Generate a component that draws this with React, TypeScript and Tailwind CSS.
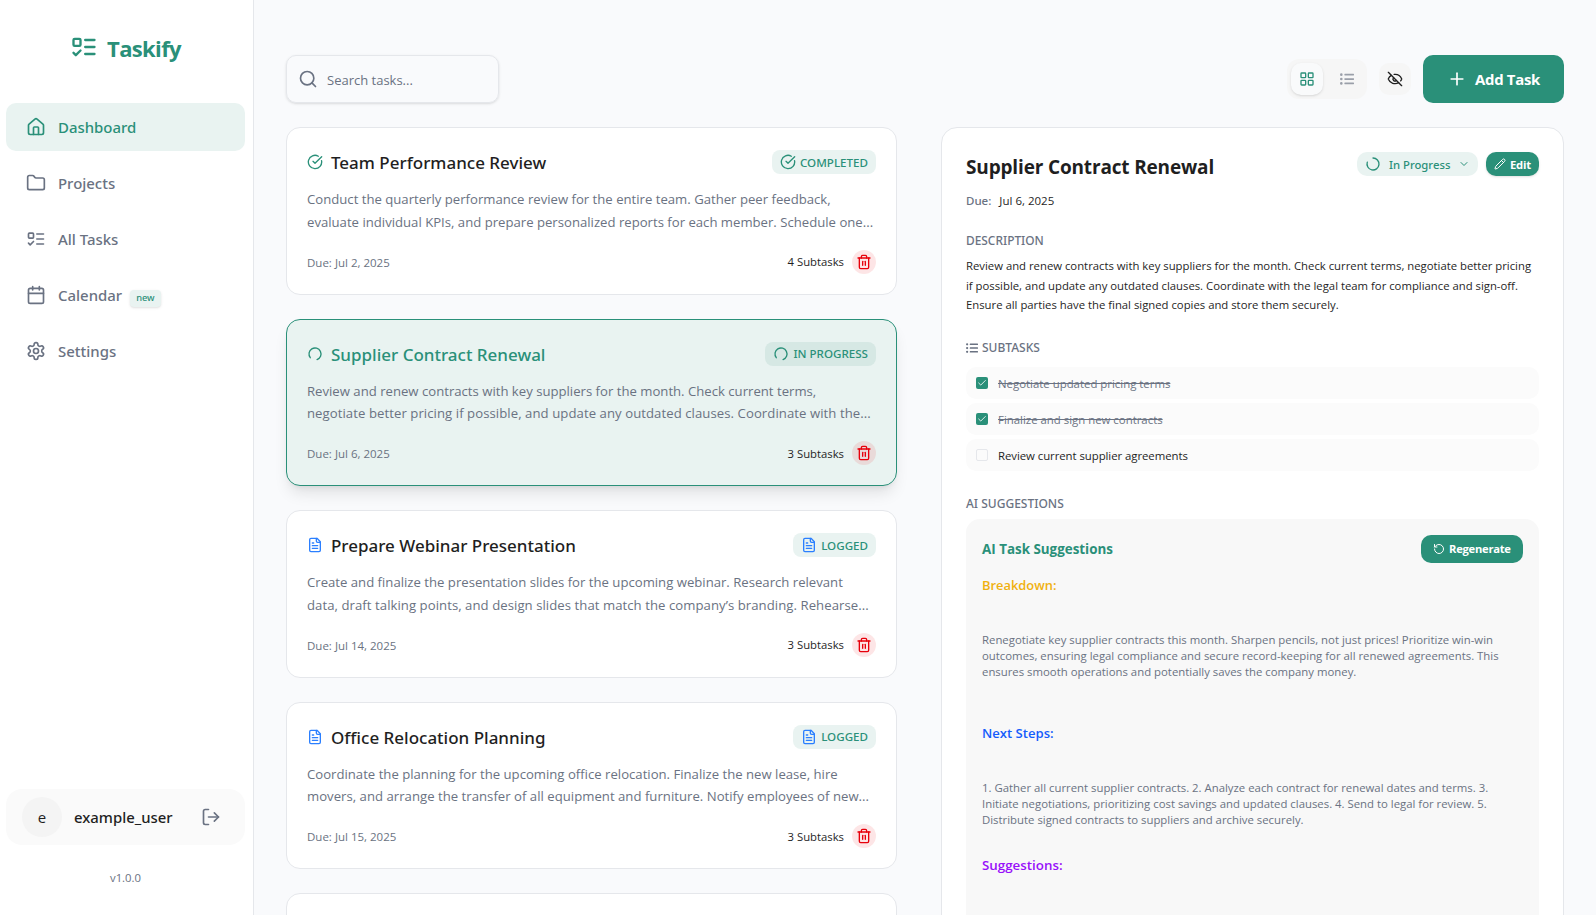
import React from "react";
import {
  LuCalendar,
  LuCheck,
  LuChevronDown,
  LuCircleCheckBig,
  LuEyeOff,
  LuFileText,
  LuFolder,
  LuHouse,
  LuLayoutGrid,
  LuListTodo,
  LuLoaderCircle,
  LuLogOut,
  LuPencil,
  LuPlus,
  LuRotateCcw,
  LuSearch,
  LuSettings,
  LuTrash2,
} from "react-icons/lu";
import { FaListUl } from "react-icons/fa";

type Status = "completed" | "progress" | "logged";

interface Task {
  title: string;
  status: Status;
  lines: string[];
  due: string;
  subtasks: number;
  selected?: boolean;
  lastLine?: string;
}

const tasks: Task[] = [
  {
    title: "Team Performance Review",
    status: "completed",
    lines: [
      "Conduct the quarterly performance review for the entire team. Gather peer feedback,",
      "evaluate individual KPIs, and prepare personalized reports for each member. Schedule one...",
    ],
    due: "Jul 2, 2025",
    subtasks: 4,
  },
  {
    title: "Supplier Contract Renewal",
    status: "progress",
    lines: [
      "Review and renew contracts with key suppliers for the month. Check current terms,",
      "negotiate better pricing if possible, and update any outdated clauses. Coordinate with the...",
    ],
    due: "Jul 6, 2025",
    subtasks: 3,
    selected: true,
    lastLine: "tracking-[0.065px]",
  },
  {
    title: "Prepare Webinar Presentation",
    status: "logged",
    lines: [
      "Create and finalize the presentation slides for the upcoming webinar. Research relevant",
      "data, draft talking points, and design slides that match the company’s branding. Rehearse...",
    ],
    due: "Jul 14, 2025",
    subtasks: 3,
    lastLine: "tracking-[0.055px]",
  },
  {
    title: "Office Relocation Planning",
    status: "logged",
    lines: [
      "Coordinate the planning for the upcoming office relocation. Finalize the new lease, hire",
      "movers, and arrange the transfer of all equipment and furniture. Notify employees of new...",
    ],
    due: "Jul 15, 2025",
    subtasks: 3,
    lastLine: "tracking-[0.02px]",
  },
];

const statusLabel: Record<Status, string> = {
  completed: "COMPLETED",
  progress: "IN PROGRESS",
  logged: "LOGGED",
};

function StatusIcon({ status }: { status: Status }) {
  if (status === "completed") return <LuCircleCheckBig className="size-4 shrink-0 text-[#2a9079]" />;
  if (status === "progress") return <LuLoaderCircle className="size-4 shrink-0 rotate-[142deg] text-[#2a9079]" />;
  return <LuFileText className="size-4 shrink-0 text-[#2b7fff]" />;
}

function Lines({ lines, lastLine = "" }: { lines: string[]; lastLine?: string }) {
  return (
    <>
      {lines.map((line, i) => (
        <span key={line} className={`block whitespace-nowrap ${i === lines.length - 1 ? lastLine : ""}`}>
          {line}
        </span>
      ))}
    </>
  );
}

function TaskCard({ task }: { task: Task }) {
  const selected = task.selected;
  return (
    <article
      className={`h-[167.5px] shrink-0 rounded-[14px] border px-5 py-5 ${
        selected
          ? "border-[#2a9079] bg-[#e9f3f1] shadow-[0_10px_15px_-3px_rgba(0,0,0,0.1),0_4px_6px_-4px_rgba(0,0,0,0.1)]"
          : "border-gray-200 bg-white"
      }`}
    >
      <div className="flex h-7 items-center justify-between">
        <div className="flex items-center gap-2">
          <StatusIcon status={task.status} />
          <h3
            className={`pt-px font-['Noto_Sans'] text-[17px] leading-[27px] font-medium whitespace-nowrap ${
              selected ? "text-[#2a9079]" : "text-[#1f1f1f]"
            }`}
          >
            {task.title}
          </h3>
        </div>
        <span
          className={`flex h-6 items-center gap-1 rounded-lg px-2 font-['Noto_Sans'] text-[11.6px] font-medium whitespace-nowrap text-[#2a9079] ${
            selected ? "bg-[#d6e8e4]" : "bg-[#e9f3f1]"
          }`}
        >
          <StatusIcon status={task.status} />
          <span className="pt-px">{statusLabel[task.status]}</span>
        </span>
      </div>
      <p className="mt-3 text-[13.15px] leading-[22.75px] text-gray-500">
        <Lines lines={task.lines} lastLine={task.lastLine} />
      </p>
      <div className="mt-4 flex h-6 items-center justify-between">
        <span className="pt-0.5 text-[11.5px] text-gray-500">Due: {task.due}</span>
        <div className="flex items-center gap-2">
          <span className="pt-0.5 text-[11.3px] text-[#1f1f1f]">{task.subtasks} Subtasks</span>
          <button className="flex size-6 items-center justify-center rounded-full bg-[#e7000b]/10 text-[#e7000b]">
            <LuTrash2 className="size-4" />
          </button>
        </div>
      </div>
    </article>
  );
}

const navItems = [
  { label: "Dashboard", icon: LuHouse, active: true },
  { label: "Projects", icon: LuFolder },
  { label: "All Tasks", icon: LuListTodo },
  { label: "Calendar", icon: LuCalendar, badge: "new" },
  { label: "Settings", icon: LuSettings },
];

function Sidebar() {
  return (
    <aside className="flex w-[254px] shrink-0 flex-col border-r border-gray-200 bg-white pr-2 pl-1.5">
      <div className="flex h-[103px] items-start justify-center gap-[9px] pt-8 text-[#2a9079]">
        <LuListTodo className="mt-px size-7" />
        <span className="text-[22px] leading-[32px] font-bold tracking-[-0.65px]">Taskify</span>
      </div>
      <nav className="flex flex-col gap-2">
        {navItems.map(({ label, icon: Icon, active, badge }) => (
          <a
            key={label}
            className={`flex h-12 items-center gap-3 rounded-[10px] px-5 font-['Noto_Sans'] text-[14.95px] font-medium ${
              active ? "bg-[#e9f3f1] text-[#2a9079]" : "text-gray-500"
            }`}
          >
            <Icon className="size-5" />
            <span className="flex items-center gap-2">
              {label}
              {badge && (
                <span className="mt-1.5 flex h-[17px] items-center rounded bg-[#e9f3f1] px-1.5 text-[9.3px] text-[#2a9079] shadow-sm">
                  {badge}
                </span>
              )}
            </span>
          </a>
        ))}
      </nav>
      <div className="mt-auto flex h-14 items-center rounded-2xl bg-[#fafafa] pr-6 pl-4">
        <div className="flex size-10 items-center justify-center rounded-full bg-[#f4f4f4] text-[15px] text-[#1f1f1f]">e</div>
        <span className="ml-3 font-['Noto_Sans'] text-[14.9px] font-medium text-[#1f1f1f]">example_user</span>
        <LuLogOut className="ml-auto size-5 text-gray-500" />
      </div>
      <div className="mt-6 mb-7 text-center text-[11.3px] leading-[18px] text-gray-500">v1.0.0</div>
    </aside>
  );
}

function Toolbar() {
  return (
    <header className="flex h-12 shrink-0 items-center justify-between">
      <div className="flex h-12 w-[213px] items-center gap-[9px] rounded-[10px] border border-gray-200 px-[11px] text-gray-500 shadow-sm">
        <LuSearch className="size-5" />
        <span className="pt-[3px] text-[13px]">Search tasks...</span>
      </div>
      <div className="flex items-center gap-3">
        <div className="flex h-10 items-center gap-2 rounded-xl bg-[#f6f6f6] p-1">
          <button className="flex size-8 items-center justify-center rounded-[10px] bg-gray-50 text-[#2a9079] shadow-sm">
            <LuLayoutGrid className="size-4" />
          </button>
          <button className="flex size-8 items-center justify-center text-[#9a9fa9]">
            <FaListUl className="size-3.5" />
          </button>
        </div>
        <button className="flex size-8 items-center justify-center rounded-[10px] bg-[#f6f6f6] text-[#1f1f1f]">
          <LuEyeOff className="size-4" />
        </button>
        <button className="flex h-12 w-[141px] items-center gap-2 rounded-[10px] bg-[#2a9079] pl-6 text-[14.9px] font-bold tracking-[-0.28px] text-white">
          <LuPlus className="size-5" />
          <span>Add Task</span>
        </button>
      </div>
    </header>
  );
}

const subtasks = [
  { label: "Negotiate updated pricing terms", done: true },
  { label: "Finalize and sign new contracts", done: true },
  { label: "Review current supplier agreements", done: false },
];

function DetailPanel() {
  return (
    <section className="h-[900px] w-[623px] shrink-0 rounded-2xl border border-gray-200 bg-white px-6 pt-6">
      <div className="flex h-6 items-start justify-between">
        <h2 className="text-[19px] leading-[30px] font-bold tracking-[-0.16px] text-[#1f1f1f]">Supplier Contract Renewal</h2>
        <div className="flex gap-2 text-[#2a9079]">
          <button className="flex h-6 w-[121px] items-center rounded-[10px] bg-[#e9f3f1] pl-2 font-['Noto_Sans'] text-[11.3px] font-medium">
            <LuLoaderCircle className="size-4 -rotate-90" />
            <span className="ml-2 pt-0.5">In Progress</span>
            <LuChevronDown className="ml-2 size-3" />
          </button>
          <button className="flex h-6 w-[53px] items-center gap-1 rounded-[10px] bg-[#2a9079] pl-2 text-[11.3px] font-bold tracking-[-0.25px] text-white shadow-sm">
            <LuPencil className="size-3" />
            <span className="pt-0.5">Edit</span>
          </button>
        </div>
      </div>
      <p className="mt-[17px] flex gap-2 text-[11.5px] leading-4 text-[#1f1f1f]">
        <span className="font-['Noto_Sans'] font-medium text-gray-500">Due:</span>
        <span>Jul 6, 2025</span>
      </p>
      <h4 className="mt-[23px] font-['Noto_Sans'] text-[11.9px] leading-4 font-medium text-gray-500">DESCRIPTION</h4>
      <p className="mt-2 text-[11.32px] leading-[19.5px] text-[#1f1f1f]">
        <Lines
          lines={[
            "Review and renew contracts with key suppliers for the month. Check current terms, negotiate better pricing",
            "if possible, and update any outdated clauses. Coordinate with the legal team for compliance and sign-off.",
            "Ensure all parties have the final signed copies and store them securely.",
          ]}
        />
      </p>
      <h4 className="mt-[25px] flex items-center gap-1 font-['Noto_Sans'] text-[12px] leading-4 font-medium text-gray-500">
        <FaListUl className="size-3" />
        SUBTASKS
      </h4>
      <ul className="mt-[11px] flex flex-col gap-1">
        {subtasks.map((s) => (
          <li key={s.label} className="flex h-8 items-center gap-2.5 rounded-[10px] bg-[#fbfbfb] px-2.5 text-[11.4px]">
            <span
              className={`flex size-3 items-center justify-center rounded-[2px] ${
                s.done ? "bg-[#2a9079] text-white" : "border border-gray-200 bg-[#fbfbfb]"
              }`}
            >
              {s.done && <LuCheck className="size-2.5" />}
            </span>
            <span className={s.done ? "pt-0.5 text-gray-500 line-through" : "pt-0.5 tracking-[-0.06px] text-[#1f1f1f]"}>{s.label}</span>
          </li>
        ))}
      </ul>
      <h4 className="mt-[25px] font-['Noto_Sans'] text-[12px] leading-4 font-medium text-gray-500">AI SUGGESTIONS</h4>
      <div className="mt-[7px] h-[500px] rounded-[14px] bg-[#f8f8f8] p-4 text-[11.36px] leading-4 text-gray-500">
        <div className="flex h-7 items-center justify-between">
          <h5 className="text-[13.4px] font-bold text-[#2a9079]">AI Task Suggestions</h5>
          <button className="flex h-7 w-[102px] items-center gap-1 rounded-[10px] bg-[#2a9079] pl-3 text-[11.2px] font-bold tracking-[-0.25px] text-white">
            <LuRotateCcw className="size-3" />
            <span className="pt-px">Regenerate</span>
          </button>
        </div>
        <h6 className="mt-3 text-[12.9px] leading-5 font-semibold text-[#f0b110]">Breakdown:</h6>
        <p className="mt-[37px]">
          <Lines
            lines={[
              "Renegotiate key supplier contracts this month. Sharpen pencils, not just prices! Prioritize win-win",
              "outcomes, ensuring legal compliance and secure record-keeping for all renewed agreements. This",
              "ensures smooth operations and potentially saves the company money.",
            ]}
          />
        </p>
        <h6 className="mt-[43px] text-[13.1px] leading-5 font-semibold text-[#155dfc]">Next Steps:</h6>
        <p className="mt-[37px]">
          <Lines
            lines={[
              "1. Gather all current supplier contracts. 2. Analyze each contract for renewal dates and terms. 3.",
              "Initiate negotiations, prioritizing cost savings and updated clauses. 4. Send to legal for review. 5.",
              "Distribute signed contracts to suppliers and archive securely.",
            ]}
          />
        </p>
        <h6 className="mt-[27px] text-[13.35px] leading-5 font-semibold text-[#9810fa]">Suggestions:</h6>
      </div>
    </section>
  );
}

export default function App() {
  return (
    <div className="flex h-[915px] w-full overflow-hidden bg-[#f9fafc] font-['Open_Sans',sans-serif]">
      <Sidebar />
      <main className="flex min-w-0 flex-1 flex-col px-8 pt-[55px]">
        <Toolbar />
        <div className="mt-6 flex min-h-0 flex-1 justify-between">
          <div className="flex w-[611px] flex-col gap-6">
            {tasks.map((task) => (
              <TaskCard key={task.title} task={task} />
            ))}
            <article className="h-[167.5px] shrink-0 rounded-[14px] border border-gray-200 bg-white" />
          </div>
          <DetailPanel />
        </div>
      </main>
    </div>
  );
}
